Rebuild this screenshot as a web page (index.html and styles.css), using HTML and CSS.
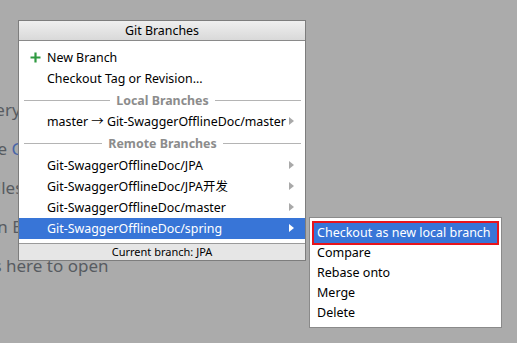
FILE: index.html
```html
<!DOCTYPE html>
<html>
<head>
<meta charset="utf-8">
<link rel="stylesheet" href="styles.css">
</head>
<body>
<div class="screen">
  <div class="welcome">
    <div class="wl wl-1">Search Everywhere <span class="key">Double Shift</span></div>
    <div class="wl wl-2">Go to File <span class="key">Ctrl+Shift+N</span></div>
    <div class="wl wl-3">Recent Files <span class="key">Ctrl+E</span></div>
    <div class="wl wl-4">Navigation Bar <span class="key">Alt+Home</span></div>
    <div class="wl wl-5">Drop files here to open</div>
  </div>

  <div class="popup">
    <div class="popup-title">Git Branches</div>
    <div class="popup-body">
      <div class="row"><svg class="plus" width="11" height="11" viewBox="0 0 11 11"><path d="M5.5 0.5v10M0.5 5.5h10" stroke="#2f9a41" stroke-width="2.2"/></svg><span>New Branch</span></div>
      <div class="row"><span>Checkout Tag or Revision...</span></div>
      <div class="sep"><span>Local Branches</span></div>
      <div class="row has-sub"><span>master → Git-SwaggerOfflineDoc/master</span><i class="arrow"></i></div>
      <div class="sep sep-2"><span>Remote Branches</span></div>
      <div class="row has-sub"><span>Git-SwaggerOfflineDoc/JPA</span><i class="arrow"></i></div>
      <div class="row has-sub"><span>Git-SwaggerOfflineDoc/JPA开发</span><i class="arrow"></i></div>
      <div class="row has-sub"><span>Git-SwaggerOfflineDoc/master</span><i class="arrow"></i></div>
      <div class="row has-sub selected"><span>Git-SwaggerOfflineDoc/spring</span><i class="arrow"></i></div>
    </div>
    <div class="popup-footer">Current branch: JPA</div>
  </div>

  <div class="submenu">
    <div class="sub-item active">Checkout as new local branch</div>
    <div class="sub-item">Compare</div>
    <div class="sub-item">Rebase onto</div>
    <div class="sub-item">Merge</div>
    <div class="sub-item">Delete</div>
  </div>
</div>
</body>
</html>
```

FILE: styles.css
```css
* { box-sizing: border-box; }
html, body { margin: 0; padding: 0; }
body {
  width: 517px;
  height: 343px;
  overflow: hidden;
  background: #ababab;
  font-family: "Noto Sans", "Noto Sans CJK SC", sans-serif;
}
.screen {
  position: relative;
  width: 517px;
  height: 343px;
}
.welcome {
  display: flex;
  flex-direction: column;
  padding-top: 98px;
  gap: 15px;
  color: #575b61;
  font-size: 17px;
  line-height: 24px;
}
.wl { white-space: nowrap; }
.key { color: #4765a8; }
.wl-1 { margin-left: -81px; }
.wl-2 { margin-left: -68px; }
.wl-3 { margin-left: -71px; }
.wl-4 { margin-left: -79px; }
.wl-5 { margin-left: -75px; }

.popup {
  position: absolute;
  left: 18px;
  top: 20px;
  width: 288px;
  border: 1px solid #7d7d7d;
  background: #fff;
  font-size: 12.4px;
  color: #000;
}
.popup-title {
  height: 20px;
  line-height: 19px;
  text-align: center;
  background: linear-gradient(#efefef, #d9d9d9);
  border-bottom: 1px solid #8a8a8a;
}
.popup-body {
  padding: 6px 0 4px;
}
.row {
  position: relative;
  height: 21px;
  line-height: 21px;
  padding-left: 28px;
  white-space: nowrap;
}
.plus {
  position: absolute;
  left: 11px;
  top: 5px;
}
.arrow {
  position: absolute;
  right: 11px;
  top: 6px;
  width: 0;
  height: 0;
  border-left: 5px solid #a9a9a9;
  border-top: 4.5px solid transparent;
  border-bottom: 4.5px solid transparent;
}
.selected {
  background: #3875d7;
  color: #fff;
}
.selected .arrow { border-left-color: #fff; }
.sep {
  height: 22px;
  display: flex;
  align-items: center;
  padding: 0 4px 0 5px;
  color: #8c8c8c;
  font-weight: bold;
}
.sep-2 { height: 23px; }
.sep::before, .sep::after {
  content: "";
  flex: 1;
  height: 1px;
  background: #b4b4b4;
}
.sep span { padding: 0 6px; }
.popup-footer {
  height: 17px;
  line-height: 16px;
  border-top: 1px solid #9a9a9a;
  background: #e6e6e6;
  text-align: center;
  font-size: 11px;
}

.submenu {
  position: absolute;
  left: 309px;
  top: 217px;
  width: 193px;
  border: 1px solid #8a8a8a;
  background: #fff;
  padding: 5px 4px 4px;
  font-size: 12.5px;
  color: #000;
}
.sub-item {
  height: 20px;
  line-height: 20px;
  padding-left: 3px;
  white-space: nowrap;
}
.sub-item.active {
  background: #3875d7;
  color: #fff;
  outline: 2px solid #e8141b;
}
```
